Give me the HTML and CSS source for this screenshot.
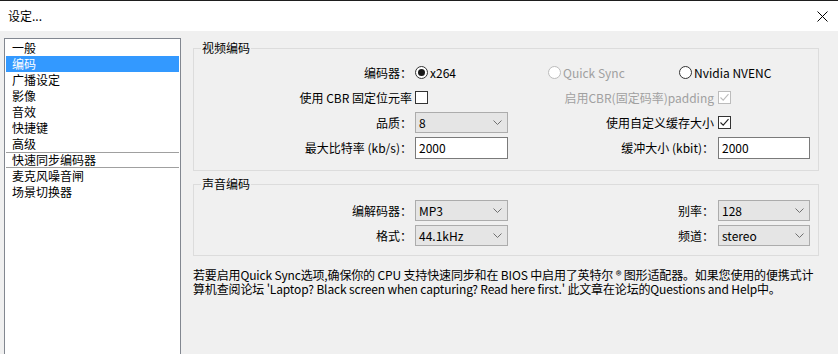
FILE: index.html
```html
<!DOCTYPE html>
<html lang="zh-CN">
<head>
<meta charset="utf-8">
<title>设定...</title>
<link rel="stylesheet" href="styles.css">
</head>
<body>
<div class="window">
  <div class="titlebar">
    <span class="title">设定...</span>
    <svg class="close" width="11" height="11" viewBox="0 0 11 11"><path d="M0.5 0.5 L10.5 10.5 M10.5 0.5 L0.5 10.5" stroke="#000" stroke-width="1" fill="none"/></svg>
  </div>
  <div class="main">
    <ul class="list">
      <li>一般</li>
      <li class="sel">编码</li>
      <li>广播设定</li>
      <li>影像</li>
      <li>音效</li>
      <li>快捷键</li>
      <li>高级</li>
      <li class="sep">快速同步编码器</li>
      <li>麦克风噪音闸</li>
      <li>场景切换器</li>
    </ul>
    <div class="panel">
      <fieldset class="group video">
        <legend>视频编码</legend>
        <div class="grid">
          <span class="lbl">编码器：</span>
          <div class="radios">
            <span class="opt w1"><span class="radio on"></span>x264</span>
            <span class="opt w2 disabled"><span class="radio dis"></span>Quick Sync</span>
            <span class="opt"><span class="radio"></span>Nvidia NVENC</span>
          </div>

          <span class="lbl">使用 CBR 固定位元率</span>
          <span class="ctl"><span class="check"></span></span>
          <span class="lbl2 disabled">启用CBR(固定码率)padding</span>
          <span class="ctl"><span class="check dis"><svg width="11" height="11" viewBox="0 0 11 11"><path d="M1.5 5.5 L4.2 8.2 L9.5 2.2" stroke="#bcbcbc" stroke-width="1.1" fill="none"/></svg></span></span>

          <span class="lbl">品质：</span>
          <span class="combo">8<svg class="chev" width="9" height="5" viewBox="0 0 9 5"><path d="M0.5 0.5 L4.5 4.5 L8.5 0.5" stroke="#707070" fill="none"/></svg></span>
          <span class="lbl2">使用自定义缓存大小</span>
          <span class="ctl"><span class="check"><svg width="11" height="11" viewBox="0 0 11 11"><path d="M1.5 5.5 L4.2 8.2 L9.5 2.2" stroke="#222" stroke-width="1.1" fill="none"/></svg></span></span>

          <span class="lbl">最大比特率 (kb/s)：</span>
          <span class="field">2000</span>
          <span class="lbl2">缓冲大小 (kbit)：</span>
          <span class="field">2000</span>
        </div>
      </fieldset>

      <fieldset class="group audio">
        <legend>声音编码</legend>
        <div class="grid">
          <span class="lbl">编解码器：</span>
          <span class="combo">MP3<svg class="chev" width="9" height="5" viewBox="0 0 9 5"><path d="M0.5 0.5 L4.5 4.5 L8.5 0.5" stroke="#707070" fill="none"/></svg></span>
          <span class="lbl2">别率：</span>
          <span class="combo">128<svg class="chev" width="9" height="5" viewBox="0 0 9 5"><path d="M0.5 0.5 L4.5 4.5 L8.5 0.5" stroke="#707070" fill="none"/></svg></span>

          <span class="lbl">格式：</span>
          <span class="combo">44.1kHz<svg class="chev" width="9" height="5" viewBox="0 0 9 5"><path d="M0.5 0.5 L4.5 4.5 L8.5 0.5" stroke="#707070" fill="none"/></svg></span>
          <span class="lbl2">频道：</span>
          <span class="combo">stereo<svg class="chev" width="9" height="5" viewBox="0 0 9 5"><path d="M0.5 0.5 L4.5 4.5 L8.5 0.5" stroke="#707070" fill="none"/></svg></span>
        </div>
      </fieldset>

      <p class="note"><span class="line">若要启用Quick Sync选项,确保你的 CPU 支持快速同步和在 BIOS 中启用了英特尔 ® 图形适配器。如果您使用的便携式计</span><span class="line">算机查阅论坛 'Laptop? Black screen when capturing? Read here first.' 此文章在论坛的Questions and Help中。</span></p>
    </div>
  </div>
</div>
</body>
</html>
```

FILE: styles.css
```css
* { box-sizing: border-box; }

html, body {
  margin: 0;
  padding: 0;
}

body {
  width: 838px;
  height: 354px;
  overflow: hidden;
  background: #f0f0f0;
  color: #000;
  font-family: "Noto Sans CJK SC", "Noto Sans", sans-serif;
  font-size: 12px;
}

.window {
  width: 838px;
  height: 354px;
  overflow: hidden;
}

.titlebar {
  height: 31px;
  border-top: 1px solid #1e1e1e;
  background: #fff;
  display: flex;
  align-items: center;
  justify-content: space-between;
  padding: 0 10px 0 8px;
}

.title {
  line-height: 16px;
  margin-top: -1px;
}

.close {
  display: block;
}

.main {
  display: flex;
  gap: 12px;
  padding: 7px 0 0 4px;
  height: 323px;
}

.list {
  list-style: none;
  margin: 0;
  padding: 1px;
  width: 177px;
  height: 340px;
  flex: none;
  background: #fff;
  border: 1px solid #828790;
}

.list li {
  height: 16px;
  line-height: 16px;
  padding-left: 6px;
  white-space: nowrap;
}

.list li.sel {
  background: #3399ff;
  color: #fff;
}

.list li.sep {
  border-top: 1px solid #a0a0a0;
  border-bottom: 1px solid #a0a0a0;
  line-height: 14px;
}

.panel {
  width: 626px;
  flex: none;
  padding-top: 2px;
}

.group {
  margin: 0;
  padding: 0 7px 0 0;
  border: 1px solid #dcdcdc;
  min-width: 0;
}

.group legend {
  margin-left: 7px;
  padding: 0 1px;
  line-height: 16px;
}

.grid {
  display: grid;
  grid-template-columns: 221px 93px 210px 92px;
  grid-auto-rows: 25px;
  align-items: center;
}

.video .grid {
  padding: 4px 0 10px;
}

.audio {
  margin-top: 5px;
}

.audio .grid {
  padding: 6px 0 7px;
}

.lbl {
  text-align: right;
  padding-right: 3px;
  white-space: nowrap;
}

.lbl2 {
  text-align: right;
  padding-right: 4px;
  white-space: nowrap;
}

.disabled {
  color: #a0a0a0;
}

.radios {
  grid-column: 2 / 5;
  display: flex;
  align-items: center;
}

.opt {
  display: flex;
  align-items: center;
  gap: 2px;
  white-space: nowrap;
}

.w1 { width: 133px; }
.w2 { width: 131px; }

.radio {
  width: 13px;
  height: 13px;
  border: 1px solid #333;
  border-radius: 50%;
  background: #fff;
  display: flex;
  align-items: center;
  justify-content: center;
}

.radio.on::after {
  content: "";
  width: 7px;
  height: 7px;
  border-radius: 50%;
  background: #1a1a1a;
}

.radio.dis {
  border-color: #bcbcbc;
}

.ctl {
  display: flex;
  align-items: center;
}

.check {
  width: 13px;
  height: 13px;
  border: 1px solid #333;
  background: #fff;
  display: flex;
  align-items: center;
  justify-content: center;
}

.check svg { display: block; }

.check.dis {
  border-color: #bcbcbc;
}

.combo {
  height: 21px;
  border: 1px solid #acacac;
  background: #e5e5e5;
  display: flex;
  align-items: center;
  justify-content: space-between;
  padding: 0 5px 0 3px;
}

.chev { display: block; }

.field {
  height: 22px;
  border: 1px solid #7a7a7a;
  background: #fff;
  display: flex;
  align-items: center;
  padding-left: 3px;
}

.note {
  margin: 12px 0 0;
  line-height: 14px;
  white-space: nowrap;
  letter-spacing: -0.15px;
}

.note .line {
  display: block;
}
```
